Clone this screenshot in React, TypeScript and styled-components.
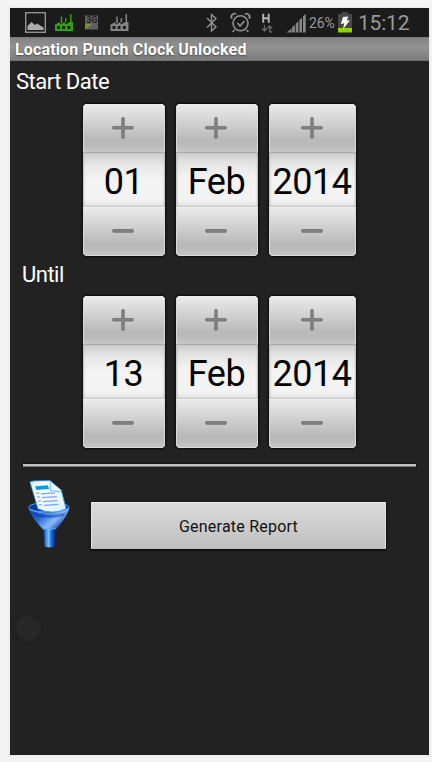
import React from 'react';
import styled, { createGlobalStyle } from 'styled-components';

const GlobalStyle = createGlobalStyle`
  body {
    margin: 0;
    background: #f4f4f4;
    font-family: Roboto, "Liberation Sans", sans-serif;
  }
`;

const Page = styled.div`
  box-sizing: border-box;
  width: 432px;
  height: 762px;
  padding: 8px 3px 7px 10px;
  overflow: hidden;
`;

const Phone = styled.main`
  height: 747px;
  background: #222;
  box-shadow: 0 0 3px #ddd;
`;

const StatusBar = styled.header`
  display: flex;
  height: 29px;
  background: #1b1b1b;
  color: #999;
  svg { display: block; flex: none; }
`;

const Percent = styled.span`
  width: 29px;
  font-size: 14px;
  line-height: 30px;
  letter-spacing: -0.15px;
  white-space: nowrap;
`;

const Clock = styled.span`
  margin-left: 6px;
  font-size: 21px;
  font-weight: 400;
  line-height: 30px;
  letter-spacing: -0.2px;
`;

const TitleBar = styled.h1`
  box-sizing: border-box;
  height: 24px;
  margin: 0;
  padding-left: 5px;
  background: linear-gradient(#777 0, #858585 2px, #929292 10px, #7d7d7d 23px, #666 24px);
  color: #fff;
  font-size: 16px;
  font-weight: 700;
  line-height: 25px;
  letter-spacing: 0.14px;
  text-shadow: 0 1px 2px #444;
`;

const DateLabel = styled.h2<{ $indent: number; $height: number; $line: number }>`
  height: ${(p) => p.$height}px;
  margin: 0;
  padding-left: ${(p) => p.$indent}px;
  color: #fff;
  font-size: 22px;
  font-weight: 400;
  line-height: ${(p) => p.$line}px;
  letter-spacing: -0.5px;
`;

const DateRow = styled.div`
  display: flex;
  gap: 11px;
  height: 152px;
  padding-left: 73px;
`;

const Picker = styled.div<{ $width: number }>`
  display: flex;
  flex-direction: column;
  width: ${(p) => p.$width}px;
  height: 152px;
  border-radius: 4px;
  overflow: hidden;
  box-shadow: 0 0 2px 1px #0b0b0b;
`;

const StepButton = styled.button<{ $down?: boolean }>`
  display: flex;
  justify-content: center;
  height: ${(p) => (p.$down ? 49 : 48)}px;
  padding: 13px 2px 0 0;
  border: 0;
  border-radius: ${(p) => (p.$down ? '0 0 4px 4px' : '4px 4px 0 0')};
  background: linear-gradient(#ebebeb 0%, #d2d2d2 38%, #bababa 73%, #b9b9b9 82%, #c5c5c5 100%);
  box-shadow: inset 0 1px #eee, inset 1px 0 #d9d9d9, inset -1px 0 #d9d9d9,
    inset 0 -1px ${(p) => (p.$down ? '#dcdcdc' : '#c9c9c9')};
`;

const Value = styled.div`
  height: 55px;
  background: linear-gradient(#858585 0, #c9c9c9 1px, #dadada 6px, #e9e9e9 15px, #f3f3f3 27px, #f3f3f3 48px, #e5e5e5 53px, #c6c6c6 55px);
  box-shadow: inset 2px 0 2px -1px #bbb, inset -2px 0 2px -1px #bbb;
  color: #000;
  font-size: 36px;
  line-height: 60px;
  text-align: center;
  white-space: nowrap;
`;

const Number = styled.span<{ $tracking: number }>`
  margin-left: -1px;
  letter-spacing: ${(p) => p.$tracking}px;
`;

const Divider = styled.hr`
  height: 2px;
  margin: 16px 13px 0;
  border: 0;
  background: #c1c1c1;
  box-shadow: 0 1px #777, 0 0 1px 1px #151515;
`;

const ReportRow = styled.section`
  display: flex;
  align-items: flex-start;
  padding: 13px 0 0 17px;
`;

const ReportButton = styled.button`
  width: 295px;
  height: 47px;
  margin: 23px 0 0 20px;
  padding: 2px 0 0;
  border: 1px solid;
  border-color: #f0f0f0 #e0e0e0 #bdbdbd #e5e5e5;
  border-radius: 1px;
  background: linear-gradient(#dadada, #c0c0c0);
  box-shadow: 0 1px 2px 1px #111;
  color: #111;
  font: 400 16px/44px Roboto, sans-serif;
  letter-spacing: 0.22px;
`;

const TouchHint = styled.div`
  width: 25px;
  height: 25px;
  margin: 67px 0 0 6px;
  border-radius: 50%;
  background: #272727;
  box-shadow: 0 0 5px #202020;
`;

function Factory({ x, color }: { x: number; color: string }) {
  return (
    <g transform={`translate(${x} 6)`}>
      <path fill={color} fillRule="evenodd" d="M0 17V10.4l5-2.4v2.6l5-2.6v2.6l5-2.6H18v9ZM2 12v3H5v-3ZM7.2 12v3H10v-3ZM12.4 12v3h3v-3Z" />
      <path d="M6.5 9V2.5M10.8 8V4.2M15.8 9V0" stroke={color} strokeWidth="1.5" />
    </g>
  );
}

function Notifications() {
  return (
    <svg width="194" height="29" viewBox="0 0 194 29">
      <rect x="15.7" y="4.7" width="19.6" height="19.6" fill="none" stroke="#929292" strokeWidth="1.4" />
      <path d="M17.5 22v-4l4-4 3.5 3 2-1.5 6.5 4V22Z" fill="#aaa" />
      <Factory x={45} color="#32a10b" />
      <rect x="75" y="7.5" width="13" height="14" fill="#606060" />
      <path d="M75 16h7l-7 5.5Z" fill="#858e20" />
      <text x="76.5" y="15" fontSize="8.5" fontWeight="700" fill="#222" fontFamily="Roboto">3G</text>
      <Factory x={100.5} color="#858585" />
    </svg>
  );
}

function Connectivity() {
  return (
    <svg width="105" height="29" viewBox="194 0 105 29" fill="none" stroke="#929292">
      <path d="m197 10 9 9-4.5 4V6.5l4.5 4-9 9" strokeWidth="1.4" />
      <circle cx="230.5" cy="15.3" r="7.5" strokeWidth="1.6" />
      <path d="m227.5 15 2.5 3 4.5-5M224.5 22l-1.8 2M236.5 22l1.8 2" strokeWidth="1.6" />
      <path d="M222 10.5c-2-2.5 1-6 4-4.5M235 6c3-1.5 6 2 4 4.5" strokeWidth="1.8" />
      <path d="M253.2 5.7v9M258.7 5.7v9M253.2 10.2h5.5" stroke="#b5b5b5" strokeWidth="1.9" />
      <path d="M254.5 17v6m-2.2-2.5 2.2 2.5 2.2-2.5M259.7 24v-6m-2.5 2.5 2.5-2.5 2.5 2.5M260 24h2" stroke="#686868" strokeWidth="1.3" />
      <path d="m276.5 24.5 5-4v4ZM282 24.5v-5.2l2.8-2.4v7.6ZM285.7 24.5v-8.7l2.7-2.5v11.2ZM289.4 24.5V12l2.6-2.2v14.7ZM293 24.5V8.2l2.7-2.4v18.7Z" stroke="none" fill="#868686" />
    </svg>
  );
}

function Battery() {
  return (
    <svg width="14" height="29" viewBox="0 0 14 29">
      <path d="M0 6h4V4h6v2h4v18H0Z" fill="#484848" />
      <path d="M0 20h14v4.5H0Z" fill="#8bd500" />
      <path d="m5 9 5-.4-1 4.2 3-.5-7 9 1.3-6-3.5.8Z" fill="#fff" />
    </svg>
  );
}

function StepGlyph({ plus }: { plus?: boolean }) {
  return (
    <svg width="22" height="22" viewBox="0 0 22 22" fill="#858585" stroke="#686868" strokeWidth=".8">
      <path d={plus
        ? 'M9.8.9q1.2-.8 2.4 0v8.7h8.7q.8 1.2 0 2.4h-8.7v9q-1.2.7-2.4 0v-9H.9q-.6-1.2 0-2.4h8.9Z'
        : 'M1 9.6h20q.7 1.3 0 2.6H1q-.7-1.3 0-2.6Z'} />
    </svg>
  );
}

function FunnelIcon() {
  return (
    <svg width="44" height="69" viewBox="0 0 44 72" preserveAspectRatio="none">
      <defs>
        <linearGradient id="cone" x1="0" x2="1" y1="0" y2=".6">
          <stop stopColor="#0a3fae" /><stop offset=".4" stopColor="#2868d5" />
          <stop offset=".72" stopColor="#8abbfa" /><stop offset="1" stopColor="#06339d" />
        </linearGradient>
        <linearGradient id="stem" x2="1">
          <stop stopColor="#0757c8" /><stop offset=".45" stopColor="#7ebfff" />
          <stop offset=".65" stopColor="#1c74dd" /><stop offset="1" stopColor="#042e9c" />
        </linearGradient>
        <linearGradient id="paper" x2="1" y2="1">
          <stop stopColor="#b5e5ff" /><stop offset=".2" stopColor="#fff" /><stop offset="1" stopColor="#d7f0ff" />
        </linearGradient>
      </defs>
      <ellipse cx="21.8" cy="29.5" rx="20.2" ry="5" fill="#0837a0" stroke="#4aa4ff" />
      <path d="m3 3 4-1 16-.3 11.2 9.8L39 31q-14 7-28 0Z" fill="url(#paper)" stroke="#36a9f3" strokeWidth=".8" />
      <path d="m8 7.5 12.8-1 1.4 4-13 1Z" fill="#1897df" />
      <path d="m23 3 .6 9.3 10.5 1.1" fill="#eaf7ff" stroke="#69bef0" />
      <path d="m9 15 3.3-.3M10 19l3.2-.3M11 23l3-.3M12 27l3-.3M14 15.5l14-1M14.8 19.5l15-1M16 23.5l14.5-1M17 27.5l14.5-1" stroke="#83a4ea" strokeWidth="1.3" />
      <path d="M1.5 30q20 11.5 40.8 0c-1.5 8-8.5 17-13.9 23.5H17C9.8 46 2.9 37 1.5 30Z" fill="url(#cone)" />
      <path d="M2 31.5q19.8 8.5 39.5 0" fill="none" stroke="#63adff" strokeWidth="1.2" />
      <path d="M5 35q16 5.5 34 0l-3 4q-13 3-28 0Z" fill="#0730a5" opacity=".45" />
      <path d="M16.8 51q6 3 11 0v19.5q-5 2-10 0Z" fill="url(#stem)" />
      <path d="M16.5 51.5q6 3 11.7 0" fill="none" stroke="#64b4ff" />
    </svg>
  );
}

const columnWidths = [82, 82, 87];
const labels = ['day', 'month', 'year'];

function DatePicker({ values }: { values: string[] }) {
  return (
    <DateRow>
      {values.map((value, index) => (
        <Picker key={labels[index]} $width={columnWidths[index]}>
          <StepButton aria-label={`Increase ${labels[index]}`}><StepGlyph plus /></StepButton>
          <Value>
            <Number $tracking={index === 1 ? -0.4 : -0.5}>{value}</Number>
          </Value>
          <StepButton $down aria-label={`Decrease ${labels[index]}`}><StepGlyph /></StepButton>
        </Picker>
      ))}
    </DateRow>
  );
}

export default function App() {
  return (
    <>
      <GlobalStyle />
      <Page>
        <Phone>
          <StatusBar>
            <Notifications />
            <Connectivity />
            <Percent>26%</Percent>
            <Battery />
            <Clock>15:12</Clock>
          </StatusBar>
          <TitleBar>Location Punch Clock Unlocked</TitleBar>
          <DateLabel $indent={6} $height={43} $line={42}>Start Date</DateLabel>
          <DatePicker values={['01', 'Feb', '2014']} />
          <DateLabel $indent={12} $height={40} $line={38}>Until</DateLabel>
          <DatePicker values={['13', 'Feb', '2014']} />
          <Divider />
          <ReportRow>
            <FunnelIcon />
            <ReportButton>Generate Report</ReportButton>
          </ReportRow>
          <TouchHint />
        </Phone>
      </Page>
    </>
  );
}
